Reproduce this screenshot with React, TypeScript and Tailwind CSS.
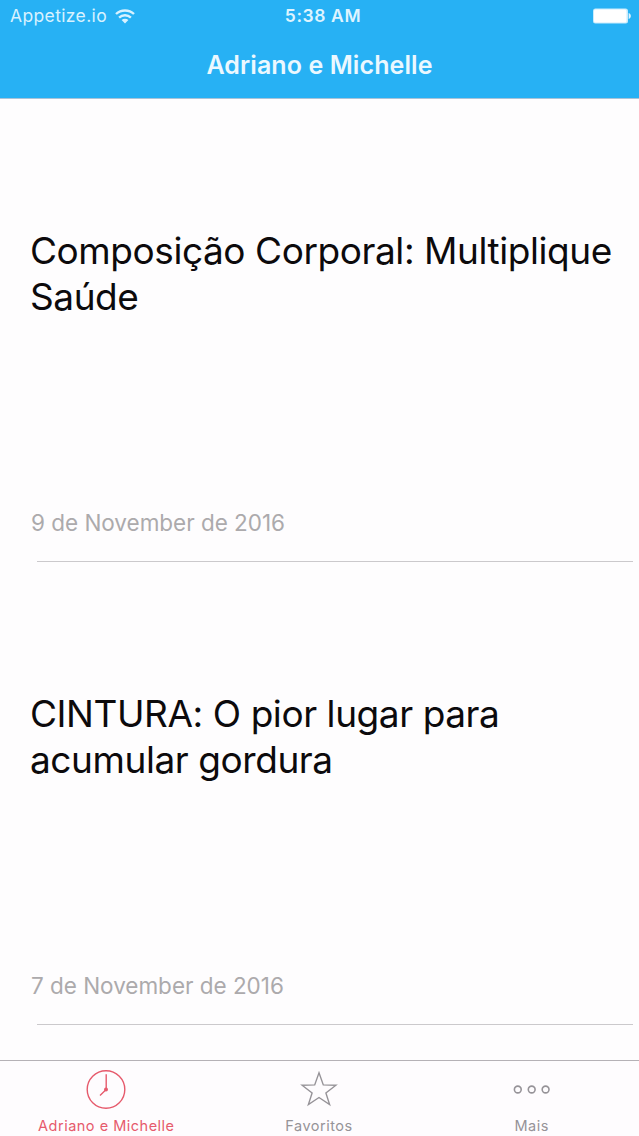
import React, { useState } from 'react';

interface Post {
  id: number;
  title: string;
  date: string;
}

const POSTS: Post[] = [
  { id: 1, title: 'Composição Corporal: Multiplique Saúde', date: '9 de November de 2016' },
  { id: 2, title: 'CINTURA: O pior lugar para acumular gordura', date: '7 de November de 2016' },
];

const WifiIcon = () => (
  <svg className="w-5 h-[15px]" viewBox="0 0 20 15" fill="none" stroke="currentColor" strokeWidth="2.4">
    <path d="M1 5C6 .3 14 .3 19 5" />
    <path d="M4.1 8.6c3.3-3.1 8.5-3.1 11.8 0" />
    <path d="M10 14.4l-3.4-3.3c1.9-1.7 4.9-1.7 6.8 0z" fill="currentColor" stroke="none" />
  </svg>
);

const BatteryIcon = () => (
  <svg className="w-[39px] h-4" viewBox="0 0 39 16" fill="currentColor">
    <rect x="0" y="0.5" width="35" height="15" rx="2.5" opacity="0.75" />
    <rect x="1" y="1.5" width="32.5" height="13" rx="1.5" />
    <path d="M35.6 5c1.6.6 2.2 1.7 2.2 3s-.6 2.4-2.2 3z" opacity="0.85" />
  </svg>
);

const ClockIcon = () => (
  <svg className="w-10 h-10" viewBox="0 0 40 40" fill="none" stroke="currentColor" strokeWidth="1.4">
    <circle cx="20" cy="20.5" r="18.8" />
    <path d="M20.2 5.2v15.300l-6.200 6" />
    <circle cx="20" cy="20.5" r="2" fill="currentColor" stroke="none" />
  </svg>
);

const StarIcon = () => (
  <svg className="w-10 h-10" viewBox="0 0 40 40" fill="none" stroke="currentColor" strokeWidth="1.4">
    <path d="M20 3.800l4.300 12.100 12.600.3-10 7.700 3.700 11.700L20 28.500l-10.600 7.100 3.700-11.700-10-7.700 12.600-.3z" />
  </svg>
);

const MoreIcon = () => (
  <svg className="w-10 h-10" viewBox="0 0 40 40" fill="none" stroke="currentColor" strokeWidth="1.6">
    <circle cx="5.8" cy="20.5" r="3.400" />
    <circle cx="19.7" cy="20.5" r="3.400" />
    <circle cx="33.6" cy="20.5" r="3.400" />
  </svg>
);

const TABS = [
  { label: 'Adriano e Michelle', icon: <ClockIcon /> },
  { label: 'Favoritos', icon: <StarIcon /> },
  { label: 'Mais', icon: <MoreIcon /> },
];

const App: React.FC = () => {
  const [activeTab, setActiveTab] = useState(0);

  return (
    <div className="flex flex-col w-[639px] h-[1136px] overflow-hidden bg-[#fefdfe] font-['Inter',sans-serif]">
      {/* Status bar + title */}
      <header className="h-[99px] shrink-0 bg-[#27b1f4] text-white border-b border-[#a9c3d8]">
        <div className="grid grid-cols-3 items-center h-8 pl-[10px] pr-[7px]">
          <div className="flex items-center gap-2 text-[17.5px] text-[#d8f2ff]">
            <span className="tracking-[0.36px]">Appetize.io</span>
            <WifiIcon />
          </div>
          <span className="pl-1 pt-px text-center text-[17.5px] font-semibold tracking-[0.6px] text-[#def4ff]">5:38 AM</span>
          <div className="flex justify-end">
            <BatteryIcon />
          </div>
        </div>
        <h1 className="h-[66px] pt-0.5 flex items-center justify-center text-[25px] font-semibold tracking-[0.09px] text-[#ebf8ff]">
          Adriano e Michelle
        </h1>
      </header>

      {/* Posts */}
      <main className="flex-1 overflow-hidden">
        {POSTS.map((post) => (
          <article key={post.id} className="h-[463px] flex flex-col pl-[31px]">
            <h2 className="mt-[129px] -ml-px text-[37px] leading-[45.5px] tracking-[-0.43px] text-[#0c0a0c] w-[600px]">{post.title}</h2>
            <p className="mt-auto mb-6 text-[22.5px] leading-7 tracking-[-0.02px] text-[#acaaac]">{post.date}</p>
            <div className="ml-1.5 mr-1.5 h-px shrink-0 bg-[#cbc9cc]" />
          </article>
        ))}
      </main>

      {/* Tab bar */}
      <nav className="h-[76px] shrink-0 grid grid-cols-3 pr-px border-t border-[#b5b1b6] bg-[#fefcfe]">
        {TABS.map((tab, idx) => (
          <button
            key={tab.label}
            onClick={() => setActiveTab(idx)}
            className={`flex flex-col items-center pt-2 ${activeTab === idx ? 'text-[#e65a6c]' : 'text-[#969398]'}`}
          >
            {tab.icon}
            <span className="mt-[7px] text-[14.5px] leading-5 tracking-[0.5px] whitespace-nowrap">{tab.label}</span>
          </button>
        ))}
      </nav>
    </div>
  );
};

export default App;
